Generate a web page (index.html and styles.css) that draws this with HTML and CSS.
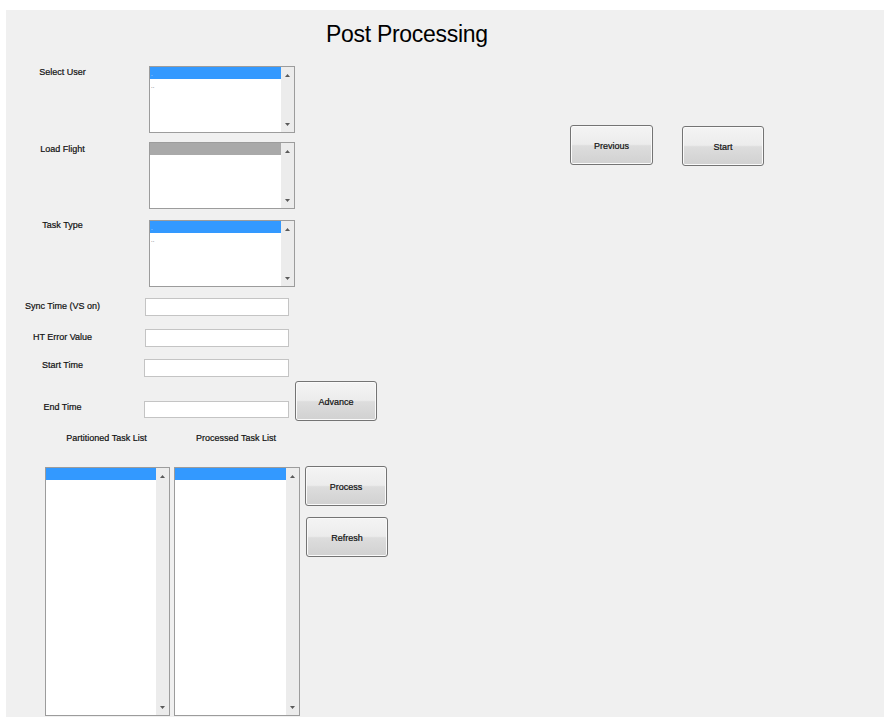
FILE: index.html
```html
<!DOCTYPE html>
<html>
<head>
<meta charset="utf-8">
<title>Post Processing</title>
<link rel="stylesheet" href="styles.css">
</head>
<body>
<div class="panel">
  <h1 class="title">Post Processing</h1>
  <div class="body">
    <div class="form">
      <div class="row r-user">
        <span class="label">Select User</span>
        <div class="listbox list-std">
          <div class="items">
            <div class="item sel"><span class="dots light">.</span></div>
            <div class="item"><span class="dots">..</span></div>
          </div>
          <div class="scroll"><span class="arrow up"></span><span class="arrow down"></span></div>
        </div>
      </div>

      <div class="row r-flight">
        <span class="label">Load Flight</span>
        <div class="listbox list-std">
          <div class="items">
            <div class="item gray"></div>
          </div>
          <div class="scroll"><span class="arrow up"></span><span class="arrow down"></span></div>
        </div>
      </div>

      <div class="row r-type">
        <span class="label">Task Type</span>
        <div class="listbox list-std">
          <div class="items">
            <div class="item sel"><span class="dots light">.</span></div>
            <div class="item"><span class="dots">..</span></div>
          </div>
          <div class="scroll"><span class="arrow up"></span><span class="arrow down"></span></div>
        </div>
      </div>

      <div class="row r-sync">
        <span class="label">Sync Time (VS on)</span>
        <div class="field f-wide"></div>
      </div>

      <div class="row r-ht">
        <span class="label">HT Error Value</span>
        <div class="field f-wide"></div>
      </div>

      <div class="row r-start">
        <span class="label">Start Time</span>
        <div class="field f-time"></div>
      </div>

      <div class="row r-end">
        <span class="label">End Time</span>
        <div class="field f-time f-end"></div>
        <button class="btn btn-advance" type="button">Advance</button>
      </div>

      <div class="row r-heads">
        <span class="head h-part">Partitioned Task List</span>
        <span class="head h-proc">Processed Task List</span>
      </div>

      <div class="row r-lists">
        <div class="listbox list-tall list-part">
          <div class="items">
            <div class="item sel"></div>
          </div>
          <div class="scroll"><span class="arrow up"></span><span class="arrow down"></span></div>
        </div>
        <div class="listbox list-tall list-proc">
          <div class="items">
            <div class="item sel"></div>
          </div>
          <div class="scroll"><span class="arrow up"></span><span class="arrow down"></span></div>
        </div>
        <div class="actions">
          <button class="btn btn-process" type="button">Process</button>
          <button class="btn btn-refresh" type="button">Refresh</button>
        </div>
      </div>
    </div>

    <div class="nav">
      <button class="btn btn-prev" type="button">Previous</button>
      <button class="btn btn-start" type="button">Start</button>
    </div>
  </div>
</div>
</body>
</html>
```

FILE: styles.css
```css
* {
  box-sizing: border-box;
}

html,
body {
  margin: 0;
  padding: 0;
  background: #ffffff;
}

body {
  font-family: "Liberation Sans", Arial, sans-serif;
  font-size: 9px;
  color: #101010;
}

/* figure window */
.panel {
  margin: 10px 0 0 6px;
  width: 878px;
  height: 707px;
  background: #f0f0f0;
  overflow: hidden;
}

.title {
  margin: 0;
  padding: 10px 0 0 320px;
  height: 38px;
  font-size: 23px;
  line-height: 28px;
  font-weight: normal;
  letter-spacing: -0.3px;
  color: #000000;
}

.body {
  display: flex;
  align-items: flex-start;
}

.form {
  width: 382px;
  flex: none;
}

.row {
  display: flex;
  align-items: flex-start;
}

.label {
  width: 113px;
  flex: none;
  text-align: center;
  line-height: 11px;
  white-space: nowrap;
  -webkit-text-stroke: 0.2px #101010;
}

/* vertical rhythm of the form */
.r-user { margin-top: 18px; }
.r-user .label { padding-top: 1px; }

.r-flight { margin-top: 9px; }
.r-flight .label { padding-top: 2px; }

.r-type { margin-top: 11px; }

.r-sync { margin-top: 11px; }
.r-sync .label { padding-top: 3px; }

.r-ht { margin-top: 13px; }
.r-ht .label { padding-top: 3px; }

.r-start { margin-top: 12px; }
.r-start .label { padding-top: 1px; }

.r-end { margin-top: 4px; }
.r-end .label { padding-top: 21px; }

.r-heads { margin-top: 12px; line-height: 11px; }

.r-lists { margin-top: 22px; }

/* list boxes */
.listbox {
  display: flex;
  flex: none;
  border: 1px solid #9c9c9c;
  background: #ffffff;
}

.list-std {
  width: 146px;
  height: 67px;
  margin-left: 30px;
}

.list-tall {
  height: 249px;
  margin-top: 1px;
}

.list-part {
  width: 125px;
  margin-left: 39px;
}

.list-proc {
  width: 126px;
  margin-left: 4px;
}

.items {
  flex: 1;
  overflow: hidden;
}

.item {
  height: 12px;
  overflow: hidden;
}

.item.sel { background: #3399ff; }
.item.gray { background: #a9a9a9; }

.dots {
  display: block;
  padding: 1px 0 0 1px;
  font-size: 6px;
  line-height: 12px;
  color: #2a2a4a;
}

.dots.light { color: #e8f2ff; }

.scroll {
  width: 13px;
  flex: none;
  background: #ececec;
  display: flex;
  flex-direction: column;
  justify-content: space-between;
  align-items: center;
  padding: 7px 0 6px;
}

.arrow {
  width: 5px;
  height: 3px;
  background: #5a5a5a;
}

.arrow.up { clip-path: polygon(50% 0, 100% 100%, 0 100%); }
.arrow.down { clip-path: polygon(0 0, 100% 0, 50% 100%); }

/* edit fields */
.field {
  flex: none;
  height: 18px;
  border: 1px solid #c4c4c4;
  background: #ffffff;
}

.f-wide {
  width: 144px;
  margin-left: 26px;
}

.f-time {
  width: 145px;
  margin-left: 25px;
}

.f-end {
  height: 17px;
  margin-top: 20px;
}

/* list headings */
.head {
  flex: none;
  text-align: center;
  white-space: nowrap;
  -webkit-text-stroke: 0.2px #101010;
}

.h-part {
  width: 125px;
  margin-left: 38px;
}

.h-proc {
  width: 126px;
  margin-left: 4px;
}

/* push buttons */
.btn {
  flex: none;
  width: 82px;
  height: 40px;
  padding: 2px 0 0;
  margin: 0;
  border: 1px solid #747474;
  border-radius: 3px;
  background: linear-gradient(to bottom, #f4f4f4 0%, #ececec 48%, #dddddd 52%, #d1d1d1 100%);
  box-shadow: inset 0 0 0 1px #fafafa;
  font-family: "Liberation Sans", Arial, sans-serif;
  font-size: 9px;
  color: #101010;
  -webkit-text-stroke: 0.2px #101010;
  display: flex;
  align-items: center;
  justify-content: center;
}

.btn-advance { margin-left: 6px; }

.actions {
  margin-left: 5px;
  display: flex;
  flex-direction: column;
}

.btn-refresh {
  margin-top: 11px;
  margin-left: 1px;
}

.nav {
  display: flex;
  align-items: flex-start;
  margin-left: 182px;
  margin-top: 77px;
}

.btn-prev { width: 83px; }

.btn-start {
  margin-left: 29px;
  margin-top: 1px;
}
```
